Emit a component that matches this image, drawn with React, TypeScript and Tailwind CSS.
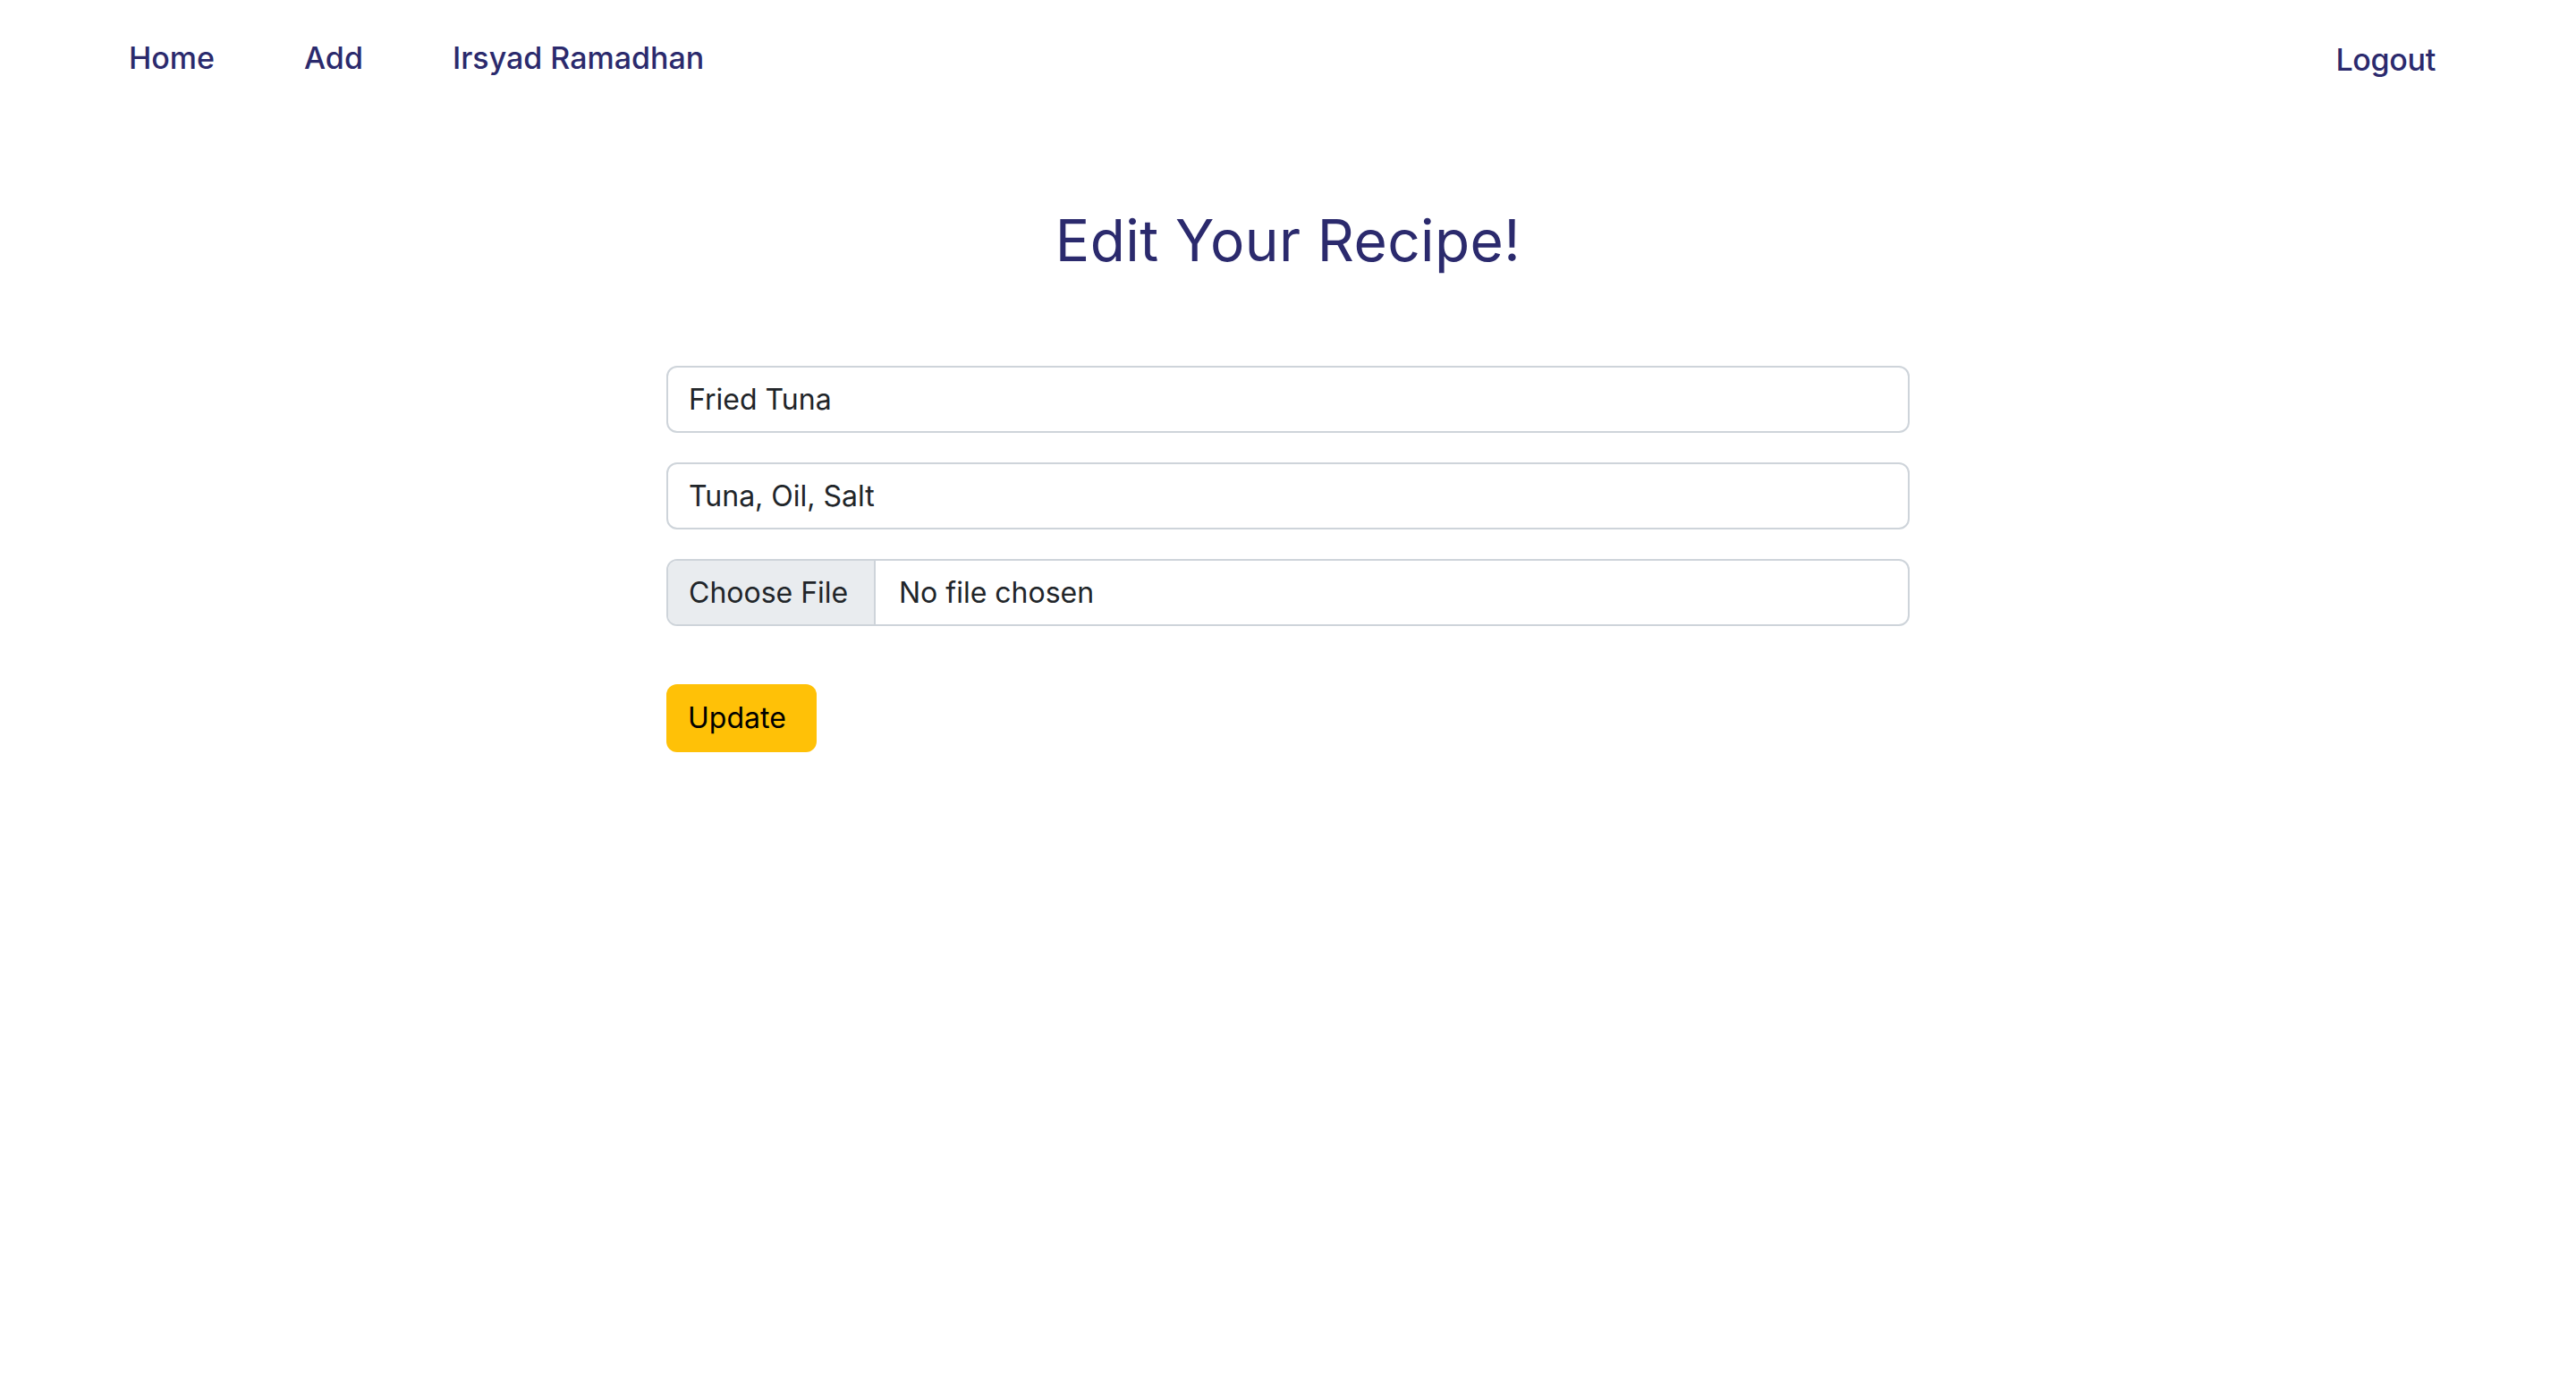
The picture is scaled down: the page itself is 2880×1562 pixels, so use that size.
export default function App() {
  return (
    <div className="min-h-screen bg-white font-['Inter','Noto_Sans',sans-serif] text-[#212529]">
      <nav className="flex h-[128px] items-center justify-between pl-[144px] pr-[157px]">
        <div className="flex items-center gap-[100px] text-[34px] font-medium text-[#2b2a6d]">
          <a href="#">Home</a>
          <a href="#">Add</a>
          <a href="#">Irsyad Ramadhan</a>
        </div>
        <a href="#" className="mt-[4px] text-[34px] font-medium tracking-[-0.3px] text-[#2b2a6d]">
          Logout
        </a>
      </nav>

      <main className="mx-auto w-[1390px]">
        <h1 className="mt-[102px] text-center text-[64px] leading-[77px] font-normal tracking-[0.4px] text-[#2b2a6d]">
          Edit Your Recipe!
        </h1>

        <form className="mt-[102px] flex flex-col gap-[33px]">
          <input
            type="text"
            defaultValue="Fried Tuna"
            className="h-[75px] w-full rounded-[12px] border-2 border-[#ced4da] px-[23px] text-[32px] text-[#212529] outline-none"
          />
          <input
            type="text"
            defaultValue="Tuna, Oil, Salt"
            className="h-[75px] w-full rounded-[12px] border-2 border-[#ced4da] px-[23px] text-[32px] text-[#212529] outline-none"
          />
          <div className="flex h-[75px] w-full overflow-hidden rounded-[12px] border-2 border-[#ced4da] text-[32px]">
            <span className="flex w-[232px] items-center border-r-2 border-[#ced4da] bg-[#e9ecef] px-[23px]">
              Choose File
            </span>
            <span className="flex items-center px-[26px]">No file chosen</span>
          </div>
          <div className="mt-[32px]">
            <button
              type="button"
              className="h-[76px] w-[168px] rounded-[12px] bg-[#ffc107] px-[24px] text-left text-[32px] text-black"
            >
              Update
            </button>
          </div>
        </form>
      </main>
    </div>
  );
}
